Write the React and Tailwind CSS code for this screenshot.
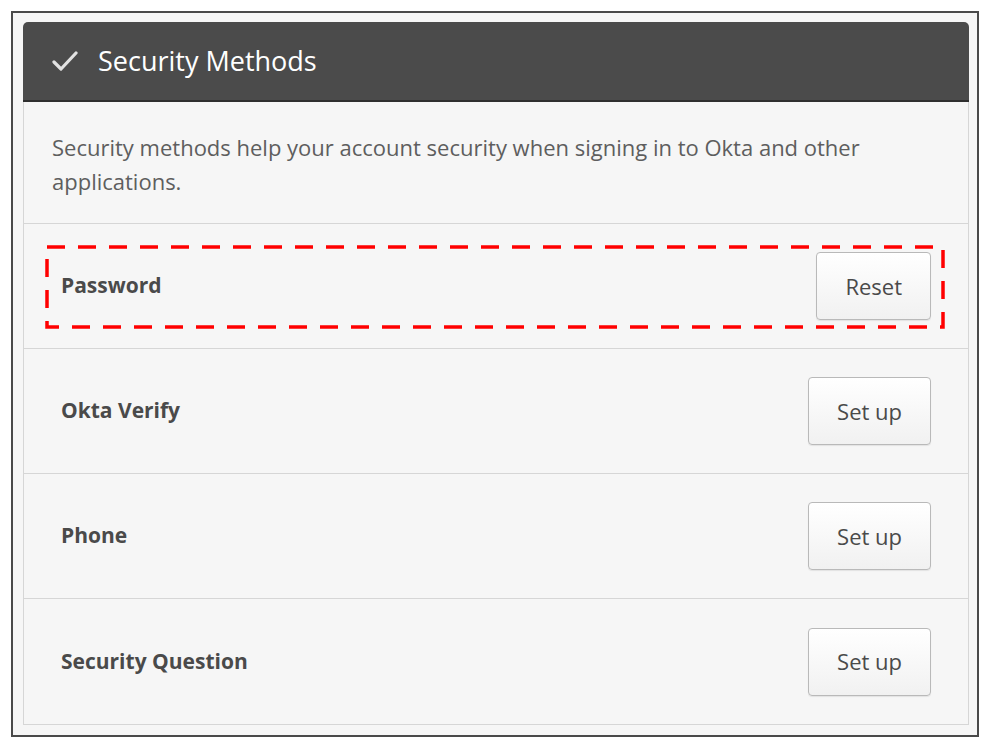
import React from "react";

const methods = [
  { name: "Password", action: "Reset", highlight: true },
  { name: "Okta Verify", action: "Set up" },
  { name: "Phone", action: "Set up" },
  { name: "Security Question", action: "Set up" },
];

const CheckIcon = () => (
  <svg width="26" height="22" viewBox="0 0 26 22" className="blur-[0.6px]">
    <path d="M2 12 L9 19 L24 3" fill="none" stroke="#e2e2e2" strokeWidth="3.2" strokeLinecap="round" strokeLinejoin="round" />
  </svg>
);

const DashedBox = () => (
  <svg className="absolute left-[21px] top-[21px] pointer-events-none" width="900" height="84">
    <rect x="2" y="2" width="896" height="80" fill="none" stroke="#ff0000" strokeWidth="3.5" strokeDasharray="18 13" />
  </svg>
);

const MethodRow = ({ method, last }) => (
  <div className={"relative flex items-center justify-between h-[125px] pl-[37px] pr-[37px]" + (last ? "" : " border-b border-[#d6d6d6]")}>
    <span className="text-[21px] font-bold text-[#4a4a4a]">{method.name}</span>
    <button className="h-[68px] px-[28px] rounded-[4px] border border-[#b9b9b9] bg-gradient-to-b from-white to-[#f1f1f1] text-[22px] text-[#4a4a4a] shadow-[0_1px_1px_rgba(0,0,0,0.08)]">
      {method.action}
    </button>
    {method.highlight && <DashedBox />}
  </div>
);

export default function App() {
  return (
    <div className="w-[992px] h-[746px] bg-white pt-[11px] pl-[11px]" style={{ fontFamily: "'Open Sans', Arial, sans-serif" }}>
      <div className="w-[968px] h-[726px] border-2 border-[#4a4a4a] bg-[#f6f6f6] pt-[9px] pl-[10px]">
        <div className="w-[946px]">
          <div className="h-[80px] rounded-t-[5px] bg-[#4b4b4b] border-b-2 border-[#2f2f2f] flex items-center pl-[29px] gap-[20px]">
            <CheckIcon />
            <h1 className="text-[27px] text-white">Security Methods</h1>
          </div>
          <div className="border-x border-b border-[#d6d6d6] bg-[#f6f6f6]">
            <p className="border-b border-[#d6d6d6] pt-[28px] pb-[25px] pl-[28px] pr-[60px] text-[22px] leading-[34px] text-[#5e5e5e]">
              Security methods help your account security when signing in to Okta and other applications.
            </p>
            {methods.map((m, i) => (
              <MethodRow key={m.name} method={m} last={i === methods.length - 1} />
            ))}
          </div>
        </div>
      </div>
    </div>
  );
}
